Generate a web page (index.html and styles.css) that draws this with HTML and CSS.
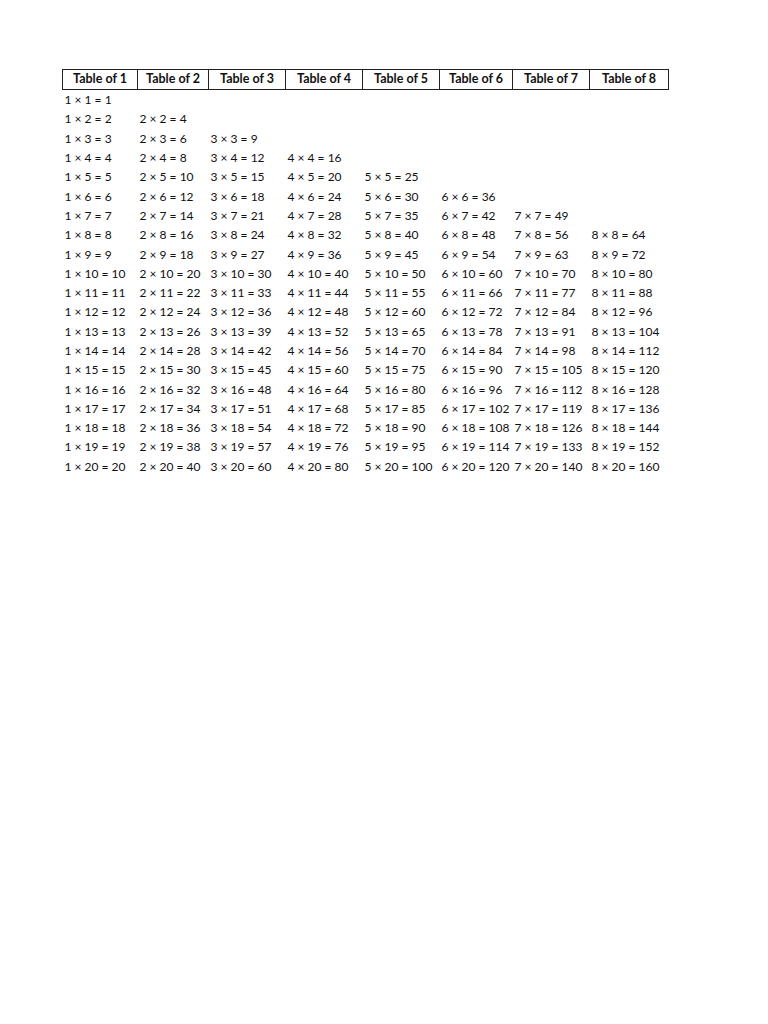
FILE: index.html
```html
<!DOCTYPE html>
<html>
<head>
<meta charset="utf-8">
<link rel="stylesheet" href="styles.css">
</head>
<body>
<table class="times">
<colgroup>
<col class="c1"><col class="c2"><col class="c3"><col class="c4"><col class="c5"><col class="c6"><col class="c7"><col class="c8">
</colgroup>
<thead>
<tr><th>Table of 1</th><th>Table of 2</th><th>Table of 3</th><th>Table of 4</th><th>Table of 5</th><th>Table of 6</th><th>Table of 7</th><th>Table of 8</th></tr>
</thead>
<tbody>
<tr><td>1 × 1 = 1</td><td></td><td></td><td></td><td></td><td></td><td></td><td></td></tr>
<tr><td>1 × 2 = 2</td><td>2 × 2 = 4</td><td></td><td></td><td></td><td></td><td></td><td></td></tr>
<tr><td>1 × 3 = 3</td><td>2 × 3 = 6</td><td>3 × 3 = 9</td><td></td><td></td><td></td><td></td><td></td></tr>
<tr><td>1 × 4 = 4</td><td>2 × 4 = 8</td><td>3 × 4 = 12</td><td>4 × 4 = 16</td><td></td><td></td><td></td><td></td></tr>
<tr><td>1 × 5 = 5</td><td>2 × 5 = 10</td><td>3 × 5 = 15</td><td>4 × 5 = 20</td><td>5 × 5 = 25</td><td></td><td></td><td></td></tr>
<tr><td>1 × 6 = 6</td><td>2 × 6 = 12</td><td>3 × 6 = 18</td><td>4 × 6 = 24</td><td>5 × 6 = 30</td><td>6 × 6 = 36</td><td></td><td></td></tr>
<tr><td>1 × 7 = 7</td><td>2 × 7 = 14</td><td>3 × 7 = 21</td><td>4 × 7 = 28</td><td>5 × 7 = 35</td><td>6 × 7 = 42</td><td>7 × 7 = 49</td><td></td></tr>
<tr><td>1 × 8 = 8</td><td>2 × 8 = 16</td><td>3 × 8 = 24</td><td>4 × 8 = 32</td><td>5 × 8 = 40</td><td>6 × 8 = 48</td><td>7 × 8 = 56</td><td>8 × 8 = 64</td></tr>
<tr><td>1 × 9 = 9</td><td>2 × 9 = 18</td><td>3 × 9 = 27</td><td>4 × 9 = 36</td><td>5 × 9 = 45</td><td>6 × 9 = 54</td><td>7 × 9 = 63</td><td>8 × 9 = 72</td></tr>
<tr><td>1 × 10 = 10</td><td>2 × 10 = 20</td><td>3 × 10 = 30</td><td>4 × 10 = 40</td><td>5 × 10 = 50</td><td>6 × 10 = 60</td><td>7 × 10 = 70</td><td>8 × 10 = 80</td></tr>
<tr><td>1 × 11 = 11</td><td>2 × 11 = 22</td><td>3 × 11 = 33</td><td>4 × 11 = 44</td><td>5 × 11 = 55</td><td>6 × 11 = 66</td><td>7 × 11 = 77</td><td>8 × 11 = 88</td></tr>
<tr><td>1 × 12 = 12</td><td>2 × 12 = 24</td><td>3 × 12 = 36</td><td>4 × 12 = 48</td><td>5 × 12 = 60</td><td>6 × 12 = 72</td><td>7 × 12 = 84</td><td>8 × 12 = 96</td></tr>
<tr><td>1 × 13 = 13</td><td>2 × 13 = 26</td><td>3 × 13 = 39</td><td>4 × 13 = 52</td><td>5 × 13 = 65</td><td>6 × 13 = 78</td><td>7 × 13 = 91</td><td>8 × 13 = 104</td></tr>
<tr><td>1 × 14 = 14</td><td>2 × 14 = 28</td><td>3 × 14 = 42</td><td>4 × 14 = 56</td><td>5 × 14 = 70</td><td>6 × 14 = 84</td><td>7 × 14 = 98</td><td>8 × 14 = 112</td></tr>
<tr><td>1 × 15 = 15</td><td>2 × 15 = 30</td><td>3 × 15 = 45</td><td>4 × 15 = 60</td><td>5 × 15 = 75</td><td>6 × 15 = 90</td><td>7 × 15 = 105</td><td>8 × 15 = 120</td></tr>
<tr><td>1 × 16 = 16</td><td>2 × 16 = 32</td><td>3 × 16 = 48</td><td>4 × 16 = 64</td><td>5 × 16 = 80</td><td>6 × 16 = 96</td><td>7 × 16 = 112</td><td>8 × 16 = 128</td></tr>
<tr><td>1 × 17 = 17</td><td>2 × 17 = 34</td><td>3 × 17 = 51</td><td>4 × 17 = 68</td><td>5 × 17 = 85</td><td>6 × 17 = 102</td><td>7 × 17 = 119</td><td>8 × 17 = 136</td></tr>
<tr><td>1 × 18 = 18</td><td>2 × 18 = 36</td><td>3 × 18 = 54</td><td>4 × 18 = 72</td><td>5 × 18 = 90</td><td>6 × 18 = 108</td><td>7 × 18 = 126</td><td>8 × 18 = 144</td></tr>
<tr><td>1 × 19 = 19</td><td>2 × 19 = 38</td><td>3 × 19 = 57</td><td>4 × 19 = 76</td><td>5 × 19 = 95</td><td>6 × 19 = 114</td><td>7 × 19 = 133</td><td>8 × 19 = 152</td></tr>
<tr><td>1 × 20 = 20</td><td>2 × 20 = 40</td><td>3 × 20 = 60</td><td>4 × 20 = 80</td><td>5 × 20 = 100</td><td>6 × 20 = 120</td><td>7 × 20 = 140</td><td>8 × 20 = 160</td></tr>
</tbody>
</table>
</body>
</html>
```
FILE: styles.css
```css
html, body {
  margin: 0;
  background: #ffffff;
}
body {
  padding: 69px 0 0 62px;
  font-family: Lato, "Liberation Sans", sans-serif;
  font-size: 12px;
  color: #111111;
}
.times {
  border-collapse: collapse;
  table-layout: fixed;
  width: 606px;
}
.c1 { width: 75px; }
.c2 { width: 71px; }
.c3 { width: 77px; }
.c4 { width: 77px; }
.c5 { width: 77px; }
.c6 { width: 73px; }
.c7 { width: 77px; }
.c8 { width: 79px; }
.times th {
  border: 1px solid #222222;
  height: 16px;
  padding: 0 0 3px 0;
  font-size: 12.5px;
  font-weight: bold;
  text-align: center;
  vertical-align: middle;
  white-space: nowrap;
}
.times td {
  height: 19.3px;
  padding: 0 0 0 2px;
  white-space: nowrap;
  vertical-align: middle;
  text-align: left;
}
```
